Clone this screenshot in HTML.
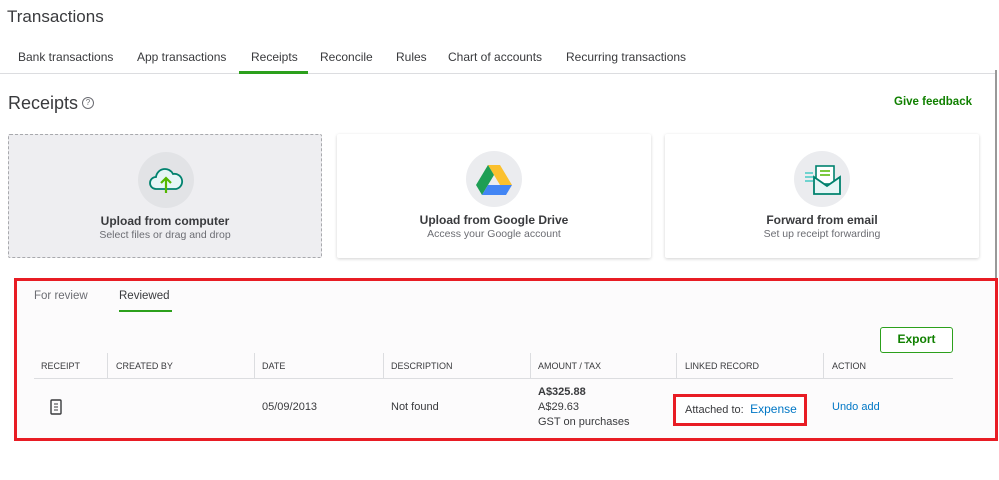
<!DOCTYPE html>
<html><head><meta charset="utf-8"><style>
*{margin:0;padding:0;box-sizing:border-box}
body{width:999px;height:480px;background:#fff;font-family:"Liberation Sans",sans-serif;color:#393a3d;position:relative;overflow:hidden}
.a{position:absolute;white-space:nowrap}
.tab{font-size:12px;top:50px;color:#393a3d}
.card{position:absolute;top:134px;width:314px;height:124px;background:#fff;box-shadow:0 1px 3px rgba(0,0,0,.18);border-radius:2px;text-align:center}
.card .c{position:absolute;left:129px;top:17px;width:56px;height:56px;border-radius:50%;background:#ebecef}
.card .t{position:absolute;top:79px;width:100%;font-size:12px;font-weight:bold;color:#393a3d}
.card .s{position:absolute;top:94px;width:100%;font-size:10.5px;color:#6b6c72}
.h{font-size:9px;top:361px;color:#393a3d}
.sep{position:absolute;top:353px;width:1px;height:26px;background:#dcdde0}
.r{font-size:11px;color:#393a3d}
</style></head><body>
<div class="a" style="left:7px;top:7px;font-size:17px;color:#393a3d">Transactions</div>
<div class="a tab" style="left:18px">Bank transactions</div>
<div class="a tab" style="left:137px">App transactions</div>
<div class="a tab" style="left:251px">Receipts</div>
<div class="a tab" style="left:320px">Reconcile</div>
<div class="a tab" style="left:396px">Rules</div>
<div class="a tab" style="left:448px">Chart of accounts</div>
<div class="a tab" style="left:566px">Recurring transactions</div>
<div class="a" style="left:0;top:73px;width:996px;height:1px;background:#dcdde0"></div>
<div class="a" style="left:239px;top:71px;width:69px;height:3px;background:#2ca01c"></div>
<div class="a" style="left:995px;top:70px;width:2px;height:210px;background:#999"></div>
<div class="a" style="left:8px;top:93px;font-size:18px;color:#393a3d">Receipts</div>
<div class="a" style="left:82px;top:97px;width:12px;height:12px;border:1px solid #6b6c72;border-radius:50%;font-size:8px;text-align:center;line-height:10px;color:#6b6c72">?</div>
<div class="a" style="left:894px;top:96px;font-size:11.5px;font-weight:bold;color:#108000">Give feedback</div>

<div class="card" style="left:8px;background:#eeeef1;border:1px dashed #a8a9ad;box-shadow:none">
<div class="c" style="background:#e2e3e6"></div>
<svg class="a" style="left:139px;top:28px" width="36" height="34" viewBox="0 0 36 34"><path d="M8 26a6 6 0 0 1 0-12a9 9 0 0 1 17-3a7 7 0 0 1 3 15z" fill="#e6f6f6" stroke="#00826e" stroke-width="1.8"/><path d="M18 30V15M13 20l5-5 5 5" stroke="#53b700" stroke-width="2.2" fill="none"/></svg>
<div class="t">Upload from computer</div><div class="s">Select files or drag and drop</div></div>

<div class="card" style="left:337px"><div class="c"></div>
<svg class="a" style="left:139px;top:31px" width="36" height="30" viewBox="0 0 36 30"><path d="M12 0h12l12 20H24z" fill="#fbc02d"/><path d="M12 0L0 20l6 10 12-20z" fill="#1e9e55"/><path d="M6 30h24l6-10H12z" fill="#4285f4"/></svg>
<div class="t">Upload from Google Drive</div><div class="s">Access your Google account</div></div>

<div class="card" style="left:665px"><div class="c"></div>
<svg class="a" style="left:138px;top:30px" width="40" height="32" viewBox="0 0 40 32"><path d="M2 9h8M2 13h8M2 17h8" stroke="#6fd3cf" stroke-width="2"/><rect x="13" y="2" width="18" height="18" fill="#fff" stroke="#00826e" stroke-width="1.6"/><path d="M17 7h10M17 11h10" stroke="#53b700" stroke-width="1.5"/><path d="M11 13v17h26V13l-13 9z" fill="#e6f6f6" stroke="#00826e" stroke-width="1.8"/></svg>
<div class="t">Forward from email</div><div class="s">Set up receipt forwarding</div></div>

<div class="a" style="left:14px;top:278px;width:984px;height:163px;border:3px solid #e81c24;background:#fcfbfc"></div>
<div class="a" style="left:34px;top:290px;font-size:11.5px;color:#6b6c72">For review</div>
<div class="a" style="left:119px;top:290px;font-size:11.5px;color:#393a3d">Reviewed</div>
<div class="a" style="left:119px;top:310px;width:53px;height:2px;background:#2ca01c"></div>
<div class="a" style="left:880px;top:327px;width:73px;height:26px;border:1.5px solid #2ca01c;border-radius:3px;font-size:12px;font-weight:bold;color:#108000;text-align:center;line-height:23px;background:#fff">Export</div>
<div class="a h" style="left:41px">RECEIPT</div>
<div class="a h" style="left:116px">CREATED BY</div>
<div class="a h" style="left:262px">DATE</div>
<div class="a h" style="left:391px">DESCRIPTION</div>
<div class="a h" style="left:538px">AMOUNT / TAX</div>
<div class="a h" style="left:685px">LINKED RECORD</div>
<div class="a h" style="left:832px">ACTION</div>
<div class="sep" style="left:107px"></div><div class="sep" style="left:254px"></div><div class="sep" style="left:383px"></div><div class="sep" style="left:530px"></div><div class="sep" style="left:676px"></div><div class="sep" style="left:823px"></div>
<div class="a" style="left:34px;top:378px;width:919px;height:1px;background:#dcdde0"></div>
<svg class="a" style="left:50px;top:399px" width="12" height="17" viewBox="0 0 12 17"><rect x="1" y="1" width="10" height="14" rx="1" fill="none" stroke="#393a3d" stroke-width="1.4"/><path d="M4 5h4M4 8h4M4 11h4" stroke="#393a3d" stroke-width="1"/></svg>
<div class="a r" style="left:262px;top:401px">05/09/2013</div>
<div class="a r" style="left:391px;top:401px">Not found</div>
<div class="a r" style="left:538px;top:386px;font-weight:bold">A$325.88</div>
<div class="a r" style="left:538px;top:401px">A$29.63</div>
<div class="a r" style="left:538px;top:416px">GST on purchases</div>
<div class="a" style="left:673px;top:394px;width:134px;height:32px;border:3px solid #e81c24;background:#fff"></div>
<div class="a r" style="left:685px;top:402px;font-size:11px">Attached to: <span style="color:#0077c5;font-size:12px">&nbsp;Expense</span></div>
<div class="a r" style="left:832px;top:401px;color:#0077c5">Undo add</div>
</body></html>
